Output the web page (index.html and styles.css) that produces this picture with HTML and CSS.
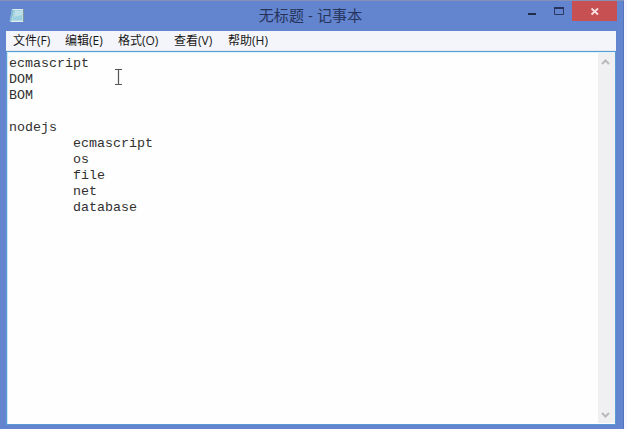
FILE: index.html
```html
<!DOCTYPE html>
<html lang="zh-CN">
<head>
<meta charset="utf-8">
<title>无标题 - 记事本</title>
<link rel="stylesheet" href="styles.css">
</head>
<body>
<main class="window">
  <header class="titlebar">
    <svg class="app-icon" width="16" height="16" viewBox="0 0 16 16">
      <path d="M3 1H15V14H1Z" fill="#b6dbe4"/>
      <path d="M3 1L0.5 13L2 14L5 2Z" fill="#86bdd4"/>
      <path d="M5 2.5H13V12H4Z" fill="#9bd0df"/>
      <path d="M6 3H13V7L5 9Z" fill="#bde0e8"/>
      <path d="M3.5 1.5H14.5M2 13.5H14" stroke="#e0edf0"/>
      <path d="M14.5 1V14" stroke="#7f969e" fill="none"/>
    </svg>
    <h1 class="title">无标题 - 记事本</h1>
    <div class="controls">
      <svg class="minimize" width="27" height="20" viewBox="0 0 27 20"><path d="M10 13H18" stroke="#232d4a" stroke-width="2"/></svg>
      <svg class="maximize" width="27" height="20" viewBox="0 0 27 20"><path d="M9.5 7.5H18.5V13.5H9.5Z" fill="none" stroke="#2c3a63"/><path d="M9 7H19" stroke="#26335a" stroke-width="2"/></svg>
      <svg class="close" width="45" height="20" viewBox="0 0 45 20"><path d="M19.5 7.5L26 13.5M26 7.5L19.5 13.5" stroke="#f8dfe2" stroke-width="1.8"/></svg>
    </div>
  </header>
  <nav class="menubar">
    <span>文件(F)</span><span>编辑(E)</span><span>格式(O)</span><span>查看(V)</span><span>帮助(H)</span>
  </nav>
  <section class="editor">
    <pre class="text">ecmascript
DOM
BOM

nodejs
	ecmascript
	os
	file
	net
	database</pre>
    <div class="scrollbar">
      <svg width="17" height="17" viewBox="0 0 17 17"><path d="M4 11L7.5 7.5L11 11" fill="none" stroke="#b9b9bb" stroke-width="2"/></svg>
      <svg width="17" height="17" viewBox="0 0 17 17"><path d="M4 7L7.5 10.5L11 7" fill="none" stroke="#b9b9bb" stroke-width="2"/></svg>
    </div>
    <svg class="cursor" width="9" height="17" viewBox="0 0 9 17"><path d="M1 0.5H8M4.5 0.5V15.5M1 15.5H8" fill="none" stroke="#555" stroke-width="1.2"/></svg>
  </section>
</main>
</body>
</html>
```
FILE: styles.css
```css
body {
  margin: 0;
  background: #f8f8ff;
  overflow: hidden;
}

.window {
  box-sizing: border-box;
  width: 624px;
  height: 429px;
  padding: 0 8px 4px 6px;
  display: flex;
  flex-direction: column;
  background: #6384ce;
  border-top: 1px solid #8490b6;
  box-shadow: inset -1px 0 #5473bd;
  font-family: "Liberation Sans", "Noto Sans CJK SC", sans-serif;
}

.titlebar {
  display: flex;
  height: 30px;
  flex: none;
}

.app-icon {
  margin: 7px 0 0 3px;
}

.title {
  flex: 1;
  margin: 4px 0 0 78px;
  text-align: center;
  font: 400 15px/21px "Open Sans", "Noto Sans CJK SC", sans-serif;
  letter-spacing: 0.1px;
  color: #26345c;
}

.controls {
  display: flex;
  margin-right: -1px;
}

.close {
  background: #c75052;
}

.menubar {
  display: flex;
  flex: none;
  box-sizing: border-box;
  height: 20px;
  padding-left: 7px;
  background: #f4f5fa;
  border-bottom: 1px solid #e8e9ee;
  font: 12px/20px "Open Sans", "Noto Sans CJK SC", sans-serif;
  color: #171717;
}

.menubar span {
  width: 53px;
  white-space: nowrap;
}

.menubar span:first-child {
  width: 52px;
}

.menubar span:nth-child(3) {
  width: 56px;
}

.menubar span:nth-child(4) {
  width: 54px;
}

.editor {
  position: relative;
  flex: 1;
  display: flex;
  border: 1px solid #5b9bd4;
  background: #fefefe;
  box-shadow: inset 0 1px #d9f5fc, inset 1px 0 #c9e9fa;
}

.text {
  flex: 1;
  margin: 0;
  padding: 4px 0 0 2px;
  font: 13.333px/16px "Liberation Mono", monospace;
  tab-size: 8;
  color: #303030;
}

.scrollbar {
  width: 17px;
  margin: 1px 0;
  display: flex;
  flex-direction: column;
  justify-content: space-between;
  background: #f0eff2;
}

.cursor {
  position: absolute;
  left: 107px;
  top: 17px;
}
```
